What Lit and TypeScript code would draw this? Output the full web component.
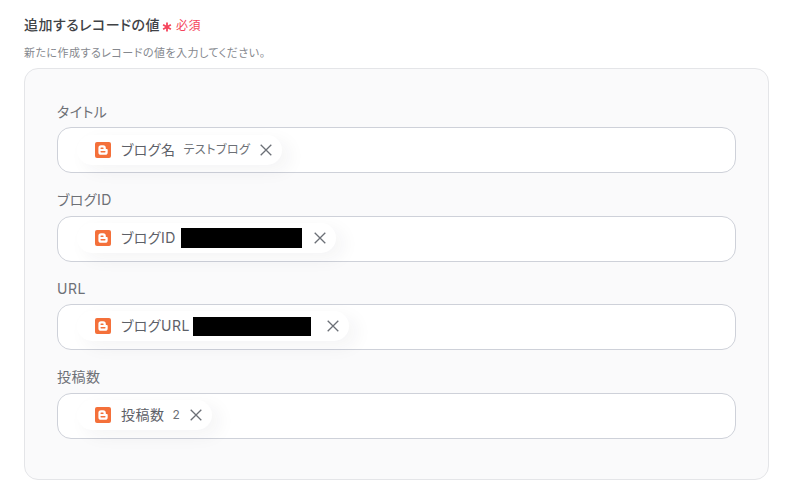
import { LitElement, css, html, nothing } from "lit";
import { customElement } from "lit/decorators.js";

interface Field {
  label: string;
  name: string;
  value?: string;
  redact?: string;
}

const FIELDS: Field[] = [
  { label: "タイトル", name: "ブログ名", value: "テストブログ" },
  { label: "ブログID", name: "ブログID", redact: "r1" },
  { label: "URL", name: "ブログURL", redact: "r2" },
  { label: "投稿数", name: "投稿数", value: "2" },
];

const bloggerIcon = html`
  <svg class="logo" viewBox="0 0 16 16" aria-hidden="true">
    <rect width="16" height="16" rx="2" fill="#f4703a"></rect>
    <path
      fill="#fff"
      fill-rule="evenodd"
      d="M6 3.2h2.2A2.6 2.6 0 0 1 10.800 5.800v.6c0 .4.3.6.7.6h.2c.5 0 1 .4 1 1v2.200a2.600 2.600 0 0 1-2.600 2.600H6a2.600 2.600 0 0 1-2.600-2.600V5.800A2.600 2.600 0 0 1 6 3.200Zm.2 2.300a.8.8 0 0 0 0 1.600h1.700a.8.8 0 0 0 0-1.600H6.200Zm0 3.400a.8.8 0 0 0 0 1.600h3.600a.8.8 0 0 0 0-1.600H6.200Z"
    ></path>
  </svg>
`;

const closeIcon = html`
  <svg class="close" viewBox="0 0 12 12" aria-hidden="true">
    <path d="M.7.7l10.600 10.600M11.300.7.700 11.300" stroke="#6b6f76" stroke-width="1.300" fill="none"></path>
  </svg>
`;

const starIcon = html`
  <svg class="star" viewBox="0 0 10 10" aria-hidden="true">
    <path
      d="M5 .5v9M1.100 2.750l7.800 4.500M8.900 2.750l-7.800 4.500"
      stroke="#f5455c"
      stroke-width="1.800"
      fill="none"
    ></path>
  </svg>
`;

@customElement("app-root")
export class AppRoot extends LitElement {
  override render() {
    return html`
      <main>
        <div class="heading">
          <h3>追加するレコードの値</h3>
          ${starIcon}
          <span class="required">必須</span>
        </div>
        <p class="hint">新たに作成するレコードの値を入力してください。</p>
        <section class="panel">
          ${FIELDS.map(
            (f) => html`
              <div class="field">
                <label>${f.label}</label>
                <div class="input">
                  <span class="pill">
                    ${bloggerIcon}
                    <span class="name">${f.name}</span>
                    ${f.value ? html`<span class="value">${f.value}</span>` : nothing}
                    ${f.redact ? html`<span class="redact ${f.redact}"></span>` : nothing}
                    ${closeIcon}
                  </span>
                </div>
              </div>
            `,
          )}
        </section>
      </main>
    `;
  }

  static override styles = css`
    :host {
      display: block;
      width: 790px;
      height: 487px;
      overflow: hidden;
      background: #fff;
      font-family: Inter, "Noto Sans CJK JP", sans-serif;
      font-feature-settings: "palt";
      letter-spacing: 0.03em;
    }

    main {
      padding: 15px 21px 0 24px;
    }

    .heading {
      display: flex;
      align-items: center;
      height: 20px;
    }

    h3 {
      margin: 0;
      font-size: 14px;
      font-weight: 500;
      line-height: 20px;
      color: #404246;
    }

    .star {
      width: 10px;
      height: 10px;
      margin: 4px 0 0 2px;
      flex: none;
    }

    .required {
      margin: 2px 0 0 4px;
      font-size: 12px;
      line-height: 20px;
      color: #f5455c;
    }

    .hint {
      margin: 10px 0 0;
      font-size: 11px;
      line-height: 16px;
      color: #85888e;
    }

    .panel {
      margin-top: 7px;
      box-sizing: border-box;
      height: 412px;
      padding: 30.45px 32px 0;
      display: flex;
      flex-direction: column;
      gap: 14.45px;
      background: #fafafb;
      border: 1px solid #e4e5e8;
      border-radius: 14px;
    }

    .field {
      display: flex;
      flex-direction: column;
      gap: 3px;
    }

    label {
      margin: -0.45px 0 0.45px;
      font-size: 14px;
      line-height: 25px;
      height: 25px;
      color: #6d7076;
    }

    .input {
      box-sizing: border-box;
      height: 46px;
      display: flex;
      align-items: center;
      padding: 0 0 1.8px 19px;
      background: #fff;
      border: 1px solid #ced1d9;
      border-radius: 14px;
    }

    .pill {
      display: inline-flex;
      align-items: center;
      height: 30px;
      padding: 0 10px 0 18px;
      background: #fff;
      border-radius: 15px;
      box-shadow: 8px 6px 18px rgba(40, 44, 60, 0.05);
    }

    .logo {
      width: 16px;
      height: 16px;
      flex: none;
    }

    .name {
      margin-left: 10px;
      font-size: 14px;
      line-height: 20px;
      color: #5d6067;
    }

    .value {
      margin-left: 8px;
      font-size: 12px;
      line-height: 20px;
      color: #6d7076;
    }

    .redact {
      display: block;
      background: #000;
      margin-left: 5px;
    }

    .r1 {
      width: 121px;
      height: 20px;
      margin-right: 2px;
    }

    .r2 {
      width: 118px;
      height: 19px;
      margin-left: 3px;
      margin-right: 6px;
    }

    .close {
      width: 12px;
      height: 12px;
      margin-left: 10px;
      flex: none;
    }
  `;
}

declare global {
  interface HTMLElementTagNameMap {
    "app-root": AppRoot;
  }
}
